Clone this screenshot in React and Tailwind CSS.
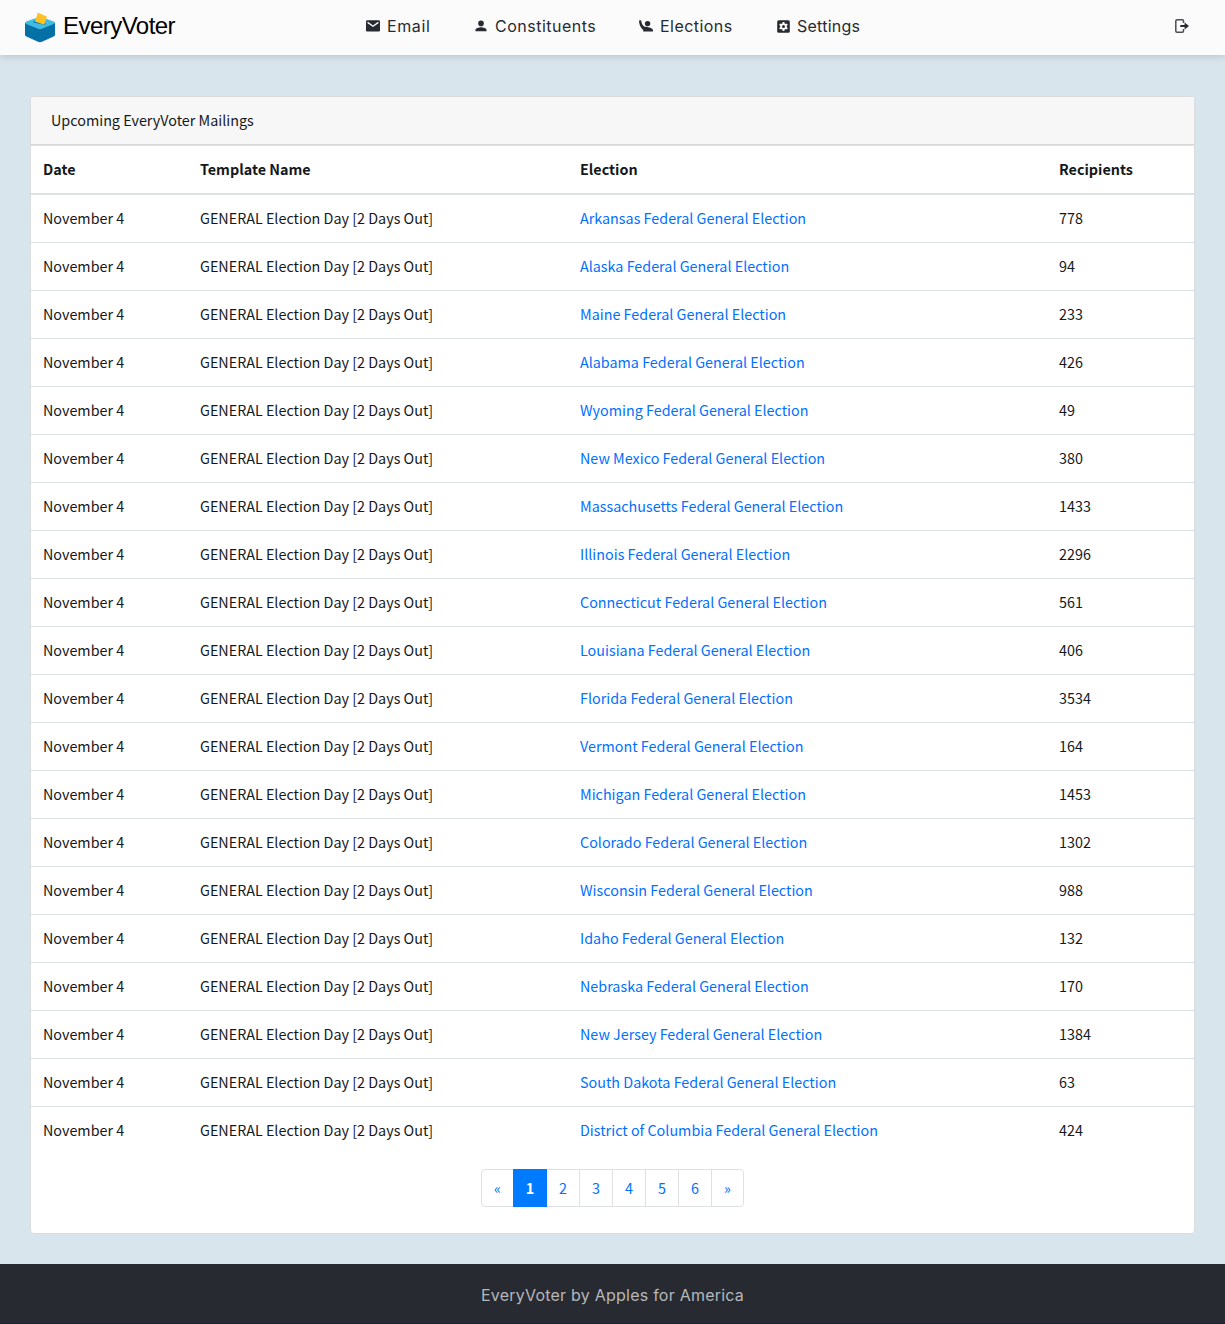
import React from "react";

const rows = [
  ["Arkansas", 778], ["Alaska", 94], ["Maine", 233], ["Alabama", 426], ["Wyoming", 49],
  ["New Mexico", 380], ["Massachusetts", 1433], ["Illinois", 2296], ["Connecticut", 561],
  ["Louisiana", 406], ["Florida", 3534], ["Vermont", 164], ["Michigan", 1453],
  ["Colorado", 1302], ["Wisconsin", 988], ["Idaho", 132], ["Nebraska", 170],
  ["New Jersey", 1384], ["South Dakota", 63], ["District of Columbia", 424],
];

function Logo() {
  return (
    <svg className="block h-[30px] w-[30px] shrink-0" viewBox="0 0 30 30">
      <path d="M0 9.800 L15 16 L30 9.800 V21.500 Q30 23 28.600 23.600 L17 28.800 Q15 29.700 13 28.800 L1.400 23.600 Q0 23 0 21.500Z" fill="#0470a6" />
      <path d="M1.200 8.600 L13.300 4.300 Q15 3.700 16.700 4.300 L28.800 8.600 Q30.800 9.700 28.800 10.900 L16.700 15.800 Q15 16.500 13.300 15.800 L1.200 10.900 Q-.8 9.700 1.200 8.600Z" fill="#3fbbe4" />
      <path d="M8.500 8 L21 10.400 L20 12 L8.500 9.400Z" fill="#087aa9" />
      <path d="M12.700 .3 Q13 -.3 13.700 0 L21.300 3.300 Q21.900 3.600 21.700 4.300 L19.200 11.800 L10 8.600Z" fill="#fcc224" />
    </svg>
  );
}

function MailIcon() {
  return (
    <svg className="h-[12px] w-[14px] shrink-0" viewBox="0 0 14 12">
      <rect y=".3" width="14" height="11.200" rx="1.300" fill="currentColor" />
      <path d="M1.600 2.400 L7 6.200 L12.400 2.400" fill="none" stroke="#fbfbfb" strokeWidth="1.400" />
    </svg>
  );
}

function PersonIcon() {
  return (
    <svg className="h-[12px] w-[12px] shrink-0" viewBox="0 0 12 12" fill="currentColor">
      <circle cx="6" cy="3.400" r="2.800" />
      <path d="M.5 11.200 V9.900 C.5 8.200 4 7.300 6 7.300 S11.500 8.200 11.500 9.900 V11.200Z" />
    </svg>
  );
}

function RaisedHandIcon() {
  return (
    <svg className="h-[12px] w-[14px] shrink-0" viewBox="0 0 14 12" fill="currentColor">
      <circle cx="8.600" cy="3.600" r="2.700" />
      <path d="M0 .6 L2.200 .2 C2.300 3.200 3.600 5.500 5.800 6.800 C9.500 6.900 14 8.300 14 10.400 V11.500 H4.200 V9.900 C1.300 7.800 .1 4.300 0 .6Z" />
    </svg>
  );
}

function SettingsIcon() {
  return (
    <svg className="h-[13px] w-[13px] shrink-0" viewBox="0 0 13 13">
      <rect x=".2" y=".2" width="12.600" height="12.600" rx="1.500" fill="currentColor" />
      <circle cx="6.500" cy="6.500" r="3.300" fill="#fbfbfb" />
      <path d="M6.500 2v9M2.600 4.250l7.800 4.500M2.600 8.750l7.800-4.500" stroke="#fbfbfb" strokeWidth="1.900" />
      <circle cx="6.500" cy="6.500" r="1.500" fill="currentColor" />
    </svg>
  );
}

function ExitIcon() {
  return (
    <svg className="block h-[14px] w-[14px]" viewBox="0 0 14 14">
      <path d="M8.500 4V2Q8.500 .8 7.300 .8H2Q.8 .8 .8 2V12Q.8 13.200 2 13.200H7.300Q8.500 13.200 8.500 12V10" fill="none" stroke="#4c4e54" strokeWidth="1.500" />
      <path d="M5.300 6.100H9.600V3.600L14 7L9.600 10.400V7.900H5.300Z" fill="#272a31" />
    </svg>
  );
}

const th = "h-[47px] pb-[2px] pl-3 text-left font-bold";

export default function App() {
  return (
    <div className="flex h-[1324px] flex-col bg-[#d9e5ed] font-['Noto_Sans_CJK_JP','Noto_Sans_CJK_SC',sans-serif] text-[14.35px] leading-[24px] text-[#15181b]">
      <header className="grid h-[55px] shrink-0 grid-cols-[366px_1fr_36px] items-center bg-[#fbfbfb] shadow-[0_1px_8px_rgba(0,0,0,0.16)]">
        <a className="flex items-center gap-[8px] pl-[25px] font-['Liberation_Sans',sans-serif] text-[24px] leading-[28px] tracking-[-0.53px] text-black">
          <Logo />
          <span className="-mt-[4px]">EveryVoter</span>
        </a>
        <nav className="flex items-center pb-[3px] font-[Inter,sans-serif] text-[16px] leading-[24px] text-[#272a31]">
          <a className="flex w-[109px] items-center gap-[7px]"><MailIcon /><span className="tracking-[0.6px]">Email</span></a>
          <a className="flex w-[164px] items-center gap-[8px]"><PersonIcon /><span className="tracking-[0.5px]">Constituents</span></a>
          <a className="flex w-[138px] items-center gap-[7px]"><RaisedHandIcon /><span className="tracking-[0.45px]">Elections</span></a>
          <a className="flex items-center gap-[7px]"><SettingsIcon /><span className="tracking-[0.25px]">Settings</span></a>
        </nav>
        <a className="-ml-[14px] pb-[3px]"><ExitIcon /></a>
      </header>

      <main className="mx-[30px] mt-[41px] h-[1138px] shrink-0 rounded-[4px] border border-[#dadcde] bg-white">
        <div className="h-[48px] rounded-t-[3px] border-b border-[#d8d8d8] bg-[#f7f7f7] px-5 py-[11px]">Upcoming EveryVoter Mailings</div>
        <table className="w-full table-fixed border-separate border-spacing-0 border-t border-[#dee2e6]">
          <colgroup>
            <col className="w-[157px]" />
            <col className="w-[380px]" />
            <col className="w-[479px]" />
            <col />
          </colgroup>
          <thead>
            <tr>
              {["Date", "Template Name", "Election", "Recipients"].map((h) => (
                <th key={h} className={th}>{h}</th>
              ))}
            </tr>
            <tr><td colSpan={4} className="h-[2px] bg-[#dee2e6] p-0" /></tr>
          </thead>
          <tbody>
            {rows.map(([state, count], i) => {
              const cell = i ? "h-[48px] border-t border-[#dee2e6] pb-[2px] pl-3" : "h-[47px] pb-[2px] pl-3";
              return (
                <tr key={state}>
                  <td className={cell}>November 4</td>
                  <td className={cell}>GENERAL Election Day [2 Days Out]</td>
                  <td className={cell}><a className="text-[#0070ff]">{state} Federal General Election</a></td>
                  <td className={cell}>{count}</td>
                </tr>
              );
            })}
          </tbody>
        </table>
        <div className="mt-[15px] flex justify-center">
          <div className="flex h-[38px] text-[#0070ff]">
            <a className="flex w-[33px] items-center justify-center rounded-l-[4px] border border-[#dee2e6]">«</a>
            <a className="z-10 -ml-px flex w-[34px] items-center justify-center bg-[#007bff] font-bold text-white">1</a>
            {[2, 3, 4, 5, 6].map((n) => (
              <a key={n} className="-ml-px flex w-[34px] items-center justify-center border border-[#dee2e6]">{n}</a>
            ))}
            <a className="-ml-px flex w-[33px] items-center justify-center rounded-r-[4px] border border-[#dee2e6]">»</a>
          </div>
        </div>
      </main>

      <footer className="mt-[30px] flex h-[60px] shrink-0 items-center justify-center border-b border-[#21202a] bg-[#272a31] pt-[2px] font-[Inter,sans-serif] text-[16px] text-[#b6b7b9]">
        <span className="tracking-[0.23px]">EveryVoter by Apples for America</span>
      </footer>
    </div>
  );
}
